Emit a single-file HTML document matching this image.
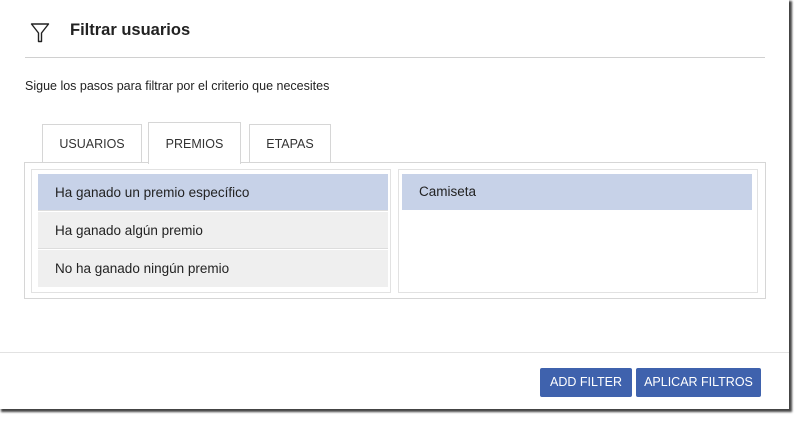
<!DOCTYPE html><html><head><style>
body{margin:0;width:800px;height:421px;background:#fff;font-family:"Liberation Sans",sans-serif;position:relative;overflow:hidden}
.a{position:absolute}
.card{left:0;top:0;width:789px;height:409px;background:#fff;box-shadow:2px 2px 2px 1px #444}
.tab{position:absolute;border:1px solid #d6d6d6;border-bottom:none;background:#fff;font-size:12.5px;color:#333;text-align:center;box-sizing:border-box}
.item{position:absolute;left:6px;width:350px;height:37px;font-size:13.5px;color:#222;line-height:37px;padding-left:17px;box-sizing:border-box;background:#efefef;border-bottom:1px solid #ddd}
.btn{position:absolute;top:368px;height:29px;background:#3f62ad;color:#fff;font-size:12.5px;line-height:29px;text-align:center;border-radius:2px}
</style></head><body>
<div class="a card"></div>
<svg class="a" style="left:30px;top:22px" width="20" height="22" viewBox="0 0 20 22"><path d="M1.5 2h17L11.5 11v8.5h-3V11z" fill="none" stroke="#222" stroke-width="1.4" stroke-linejoin="round"/></svg>
<div class="a" style="left:70px;top:21px;font-size:16.5px;font-weight:bold;color:#222">Filtrar usuarios</div>
<div class="a" style="left:25px;top:57px;width:740px;height:1px;background:#d0d0d0"></div>
<div class="a" style="left:25px;top:79px;font-size:12.5px;color:#222">Sigue los pasos para filtrar por el criterio que necesites</div>
<div class="tab" style="left:42px;top:124px;width:100px;height:39px;line-height:38px">USUARIOS</div>
<div class="tab" style="left:148px;top:122px;width:93px;height:42px;line-height:42px;z-index:2">PREMIOS</div>
<div class="tab" style="left:249px;top:124px;width:82px;height:39px;line-height:38px">ETAPAS</div>
<div class="a" style="left:24px;top:162px;width:740px;height:135px;border:1px solid #d6d6d6"></div>
<div class="a" style="left:31px;top:169px;width:358px;height:122px;border:1px solid #e2e2e2">
<div class="item" style="top:4px;background:#c7d2e8">Ha ganado un premio específico</div>
<div class="item" style="top:42px">Ha ganado algún premio</div>
<div class="item" style="top:80px;border-bottom:none">No ha ganado ningún premio</div>
</div>
<div class="a" style="left:398px;top:169px;width:358px;height:122px;border:1px solid #e2e2e2">
<div class="item" style="top:4px;left:3px;width:350px;background:#c7d2e8;height:36px;line-height:36px;border:none">Camiseta</div>
</div>
<div class="a" style="left:0;top:352px;width:789px;height:1px;background:#e2e2e2"></div>
<div class="btn" style="left:540px;width:92px">ADD FILTER</div>
<div class="btn" style="left:636px;width:125px">APLICAR FILTROS</div>
</body></html>
